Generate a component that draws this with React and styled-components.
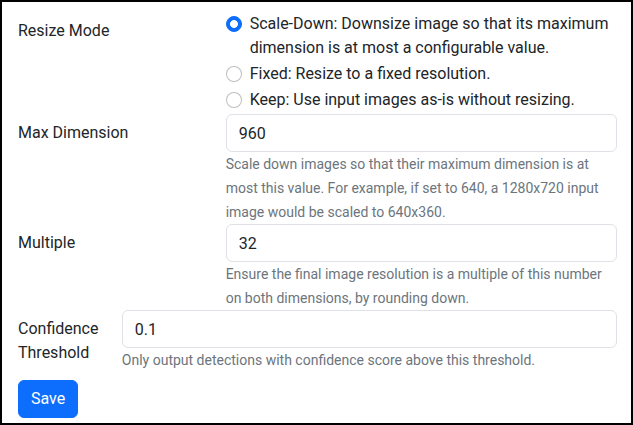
import React from "react";
import styled, { createGlobalStyle } from "styled-components";

const Global = createGlobalStyle`
  html, body { margin: 0; padding: 0; background: #fff; }
  body {
    font-family: Roboto, "Noto Sans", "Liberation Sans", sans-serif;
    font-size: 16px;
    line-height: 1.5;
    color: #212529;
  }
  *, *::before, *::after { box-sizing: border-box; }
`;

const Frame = styled.div`
  width: 633px;
  height: 425px;
  border: 2px solid #000;
  padding: 10px 14px 0 16px;
  overflow: hidden;
  background: #fff;
`;

const Form = styled.form`
  display: flex;
  flex-direction: column;
`;

const Row = styled.div`
  display: grid;
  grid-template-columns: calc((100% + 24px) * ${(p) => p.$cols} / 12 - 24px) 1fr;
  column-gap: 24px;
`;

const Label = styled.label`
  padding: 7px 0;
  font-size: 16px;
  line-height: 24px;
`;

const Control = styled.div`
  min-width: 0;
`;

const Check = styled.div`
  display: flex;
  align-items: flex-start;
  min-height: 24px;
  margin-bottom: 2px;
`;

const Radio = styled.input.attrs({ type: "radio" })`
  appearance: none;
  flex: none;
  width: 16px;
  height: 16px;
  margin: 4px 8px 0 0;
  border-radius: 50%;
  border: 1px solid rgba(0, 0, 0, 0.25);
  background: #fff;
  &:checked {
    background: #0d6efd
      radial-gradient(circle, #fff 0 3.6px, transparent 4.2px);
    border-color: #0d6efd;
  }
`;

const CheckText = styled.span`
  line-height: 24px;
`;

const Input = styled.input`
  display: block;
  width: 100%;
  height: 38px;
  padding: 6px 12px;
  font: inherit;
  font-size: 16px;
  line-height: 24px;
  color: #212529;
  background: #fff;
  border: 1px solid #dee2e6;
  border-radius: 6px;
  outline: none;
`;

const Help = styled.div`
  margin-top: 0;
  font-size: 14px;
  line-height: 24px;
  color: #6c757d;
`;

const Actions = styled.div`
  margin-top: 8px;
`;

const Button = styled.button`
  font: inherit;
  font-size: 16px;
  line-height: 24px;
  padding: 6px 12px;
  color: #fff;
  background: #0d6efd;
  border: 1px solid #0d6efd;
  border-radius: 6px;
`;

const modes = [
  { id: "scale", text: "Scale-Down: Downsize image so that its maximum dimension is at most a configurable value.", checked: true },
  { id: "fixed", text: "Fixed: Resize to a fixed resolution." },
  { id: "keep", text: "Keep: Use input images as-is without resizing." },
];

export default function App() {
  return (
    <Frame>
      <Global />
      <Form onSubmit={(e) => e.preventDefault()}>
        <Row $cols={4}>
          <Label>Resize Mode</Label>
          <Control>
            {modes.map((m) => (
              <Check key={m.id}>
                <Radio name="mode" defaultChecked={!!m.checked} />
                <CheckText>{m.text}</CheckText>
              </Check>
            ))}
          </Control>
        </Row>
        <Row $cols={4}>
          <Label>Max Dimension</Label>
          <Control>
            <Input defaultValue="960" />
            <Help>
              Scale down images so that their maximum dimension is at most this value. For example, if set to 640, a 1280x720 input image would be scaled to 640x360.
            </Help>
          </Control>
        </Row>
        <Row $cols={4}>
          <Label>Multiple</Label>
          <Control>
            <Input defaultValue="32" />
            <Help>
              Ensure the final image resolution is a multiple of this number on both dimensions, by rounding down.
            </Help>
          </Control>
        </Row>
        <Row $cols={2}>
          <Label>Confidence Threshold</Label>
          <Control>
            <Input defaultValue="0.1" />
            <Help>Only output detections with confidence score above this threshold.</Help>
          </Control>
        </Row>
        <Actions>
          <Button type="submit">Save</Button>
        </Actions>
      </Form>
    </Frame>
  );
}
